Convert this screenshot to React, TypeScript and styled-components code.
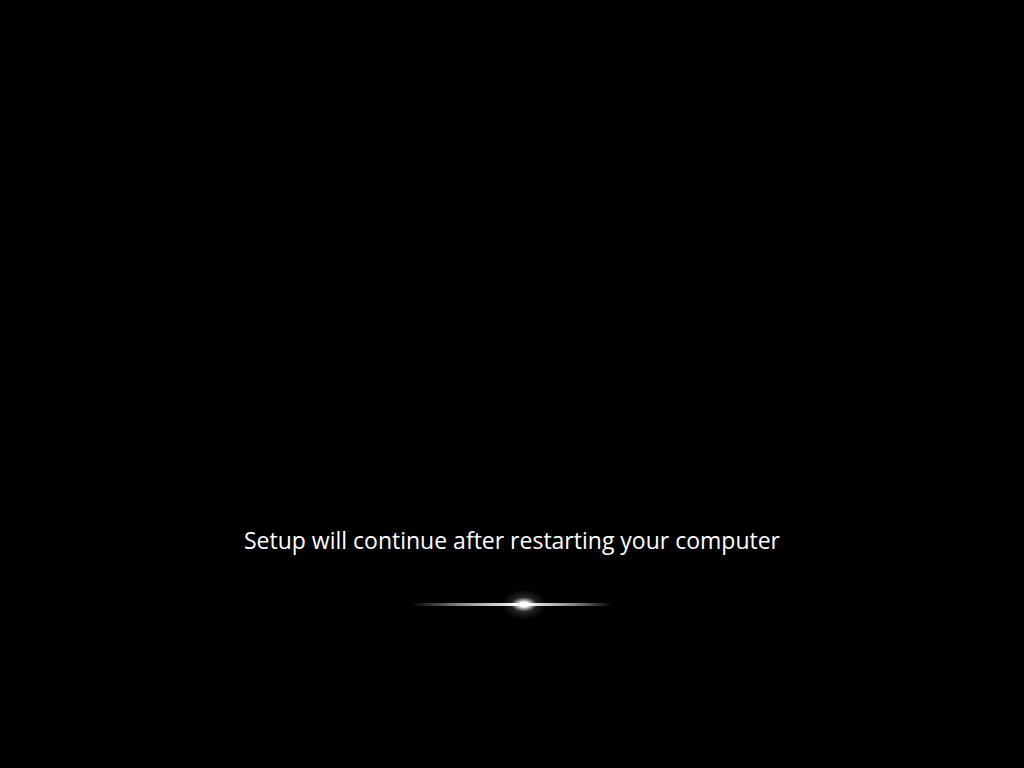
import React from "react";
import styled, { createGlobalStyle } from "styled-components";

const Global = createGlobalStyle`
  html, body { margin: 0; padding: 0; background: #000; }
  #root { height: 100vh; }
`;

const Screen = styled.div`
  width: 1024px;
  height: 768px;
  background: #000;
  display: flex;
  flex-direction: column;
  align-items: center;
  padding-top: 524px;
  box-sizing: border-box;
`;

const Message = styled.div`
  font-family: "Segoe UI", "Open Sans", "Noto Sans", sans-serif;
  font-size: 23px;
  line-height: 32px;
  color: #fff;
  letter-spacing: 0;
  margin-left: 0;
`;

const GlowWrap = styled.div`
  margin-top: 29px;
  width: 220px;
  height: 40px;
`;

function Glow() {
  return (
    <GlowWrap>
      <svg width="220" height="40" viewBox="0 0 220 40">
        <defs>
          <linearGradient id="line" x1="0" x2="1" y1="0" y2="0">
            <stop offset="0" stopColor="#fff" stopOpacity="0" />
            <stop offset="0.25" stopColor="#fff" stopOpacity="0.55" />
            <stop offset="0.55" stopColor="#fff" stopOpacity="1" />
            <stop offset="0.8" stopColor="#fff" stopOpacity="0.55" />
            <stop offset="1" stopColor="#fff" stopOpacity="0" />
          </linearGradient>
          <radialGradient id="blob" cx="0.5" cy="0.5" r="0.5">
            <stop offset="0" stopColor="#fff" stopOpacity="1" />
            <stop offset="0.35" stopColor="#fff" stopOpacity="0.95" />
            <stop offset="0.65" stopColor="#fff" stopOpacity="0.4" />
            <stop offset="1" stopColor="#fff" stopOpacity="0" />
          </radialGradient>
          <radialGradient id="halo" cx="0.5" cy="0.5" r="0.5">
            <stop offset="0" stopColor="#fff" stopOpacity="0.45" />
            <stop offset="0.5" stopColor="#fff" stopOpacity="0.15" />
            <stop offset="1" stopColor="#fff" stopOpacity="0" />
          </radialGradient>
        </defs>
        <ellipse cx="122" cy="19.5" rx="22" ry="15" fill="url(#halo)" />
        <rect x="10" y="18" width="200" height="3" fill="url(#line)" />
        <ellipse cx="122" cy="19.5" rx="13" ry="7" fill="url(#blob)" />
      </svg>
    </GlowWrap>
  );
}

export default function App() {
  return (
    <>
      <Global />
      <Screen>
        <Message>Setup will continue after restarting your computer</Message>
        <Glow />
      </Screen>
    </>
  );
}
